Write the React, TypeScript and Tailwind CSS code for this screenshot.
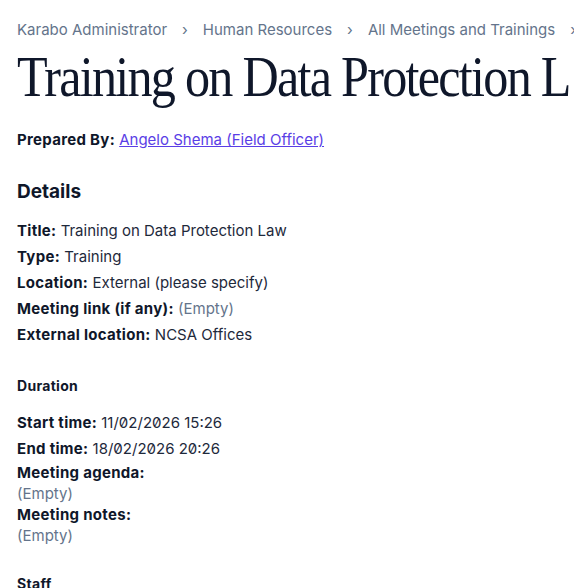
import React from "react";

function Row({ label, value, empty }: { label: string; value: string; empty?: boolean }) {
  return (
    <div className="text-[15px] leading-[26px] text-[#1e293b] slashed-zero whitespace-nowrap">
      <span className="font-bold tracking-[0.3px] text-[#0f172a]">{label}</span>{" "}
      <span className={empty ? "text-[#64748b]" : ""}>{value}</span>
    </div>
  );
}

export default function App() {
  return (
    <div className="w-[574px] h-[588px] overflow-hidden bg-white pl-[17px] font-['Inter',sans-serif]">
      <nav className="flex items-center gap-[15px] whitespace-nowrap pt-[19px] text-[15px] leading-[22px] text-[#64748b]">
        <span>Karabo Administrator</span>
        <span>›</span>
        <span>Human Resources</span>
        <span>›</span>
        <span>All Meetings and Trainings</span>
        <span>›</span>
        <span>Training on Data Protection Law</span>
      </nav>
      <h1 className="mt-[4px] w-[697px] origin-left scale-x-[0.865] truncate font-['Liberation_Serif',serif] text-[58px] leading-[64px] tracking-[-2px] text-[#0f172a]">
        Training on Data Protection Law
      </h1>
      <div className="mt-[19px] text-[15px] leading-[24px]">
        <span className="font-bold tracking-[0.3px] text-[#0f172a]">Prepared By:</span>{" "}
        <a className="text-[#5a3ee6] underline">Angelo Shema (Field Officer)</a>
      </div>
      <h2 className="mt-[26px] text-[19px] font-bold leading-[28px] text-[#0f172a]">Details</h2>
      <div className="mt-[12px]">
        <Row label="Title:" value="Training on Data Protection Law" />
        <Row label="Type:" value="Training" />
        <Row label="Location:" value="External (please specify)" />
        <Row label="Meeting link (if any):" value="(Empty)" empty />
        <Row label="External location:" value="NCSA Offices" />
      </div>
      <h3 className="mt-[27px] text-[14px] font-bold tracking-[0.3px] leading-[22px] text-[#0f172a]">Duration</h3>
      <div className="mt-[13px]">
        <Row label="Start time:" value="11/02/2026 15:26" />
        <Row label="End time:" value="18/02/2026 20:26" />
      </div>
      <div className="text-[15px] leading-[21px] text-[#1e293b]">
        <div className="font-bold tracking-[0.3px] text-[#0f172a]">Meeting agenda:</div>
        <div className="text-[#64748b]">(Empty)</div>
        <div className="font-bold tracking-[0.3px] text-[#0f172a]">Meeting notes:</div>
        <div className="text-[#64748b]">(Empty)</div>
      </div>
      <h3 className="mt-[27px] text-[14px] font-bold tracking-[0.3px] leading-[22px] text-[#0f172a]">Staff</h3>
    </div>
  );
}
